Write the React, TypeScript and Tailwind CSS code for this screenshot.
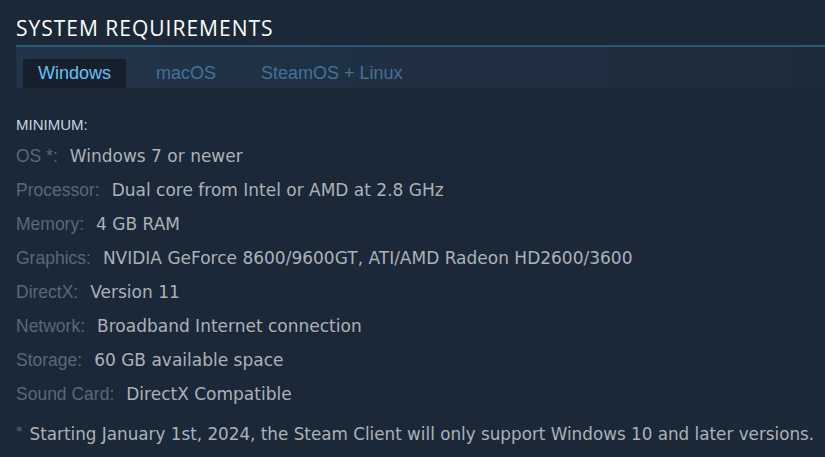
const specs = [
  { label: "OS *:", value: "Windows 7 or newer" },
  { label: "Processor:", value: "Dual core from Intel or AMD at 2.8 GHz" },
  { label: "Memory:", value: "4 GB RAM" },
  { label: "Graphics:", value: "NVIDIA GeForce 8600/9600GT, ATI/AMD Radeon HD2600/3600" },
  { label: "DirectX:", value: "Version 11" },
  { label: "Network:", value: "Broadband Internet connection" },
  { label: "Storage:", value: "60 GB available space" },
  { label: "Sound Card:", value: "DirectX Compatible" },
];

const tabs = ["Windows", "macOS", "SteamOS + Linux"];

export default function App() {
  return (
    <div className="w-[825px] h-[457px] overflow-hidden bg-[#1b2838] pl-4 font-['DejaVu_Sans',sans-serif]">
      {/* Header */}
      <h2 className="pt-[16px] h-[45px] text-[21px] leading-[24px] tracking-[1px] text-white uppercase font-['Open_Sans',sans-serif]">
        System Requirements
      </h2>

      {/* Tab bar */}
      <div className="h-[43px] border-t-2 border-[#2c5876] bg-gradient-to-r from-[#223449] to-[#1e2b3c] flex items-end gap-[15px] pl-[7px] font-['Liberation_Sans',sans-serif]">
        {tabs.map((tab, i) => (
          <div
            key={tab}
            className={
              i === 0
                ? "h-[29px] px-[15px] bg-[#16202d] text-[#66c0f4] text-[18px] leading-[29px]"
                : "h-[29px] px-[15px] text-[#457196] text-[18px] leading-[29px]"
            }
          >
            {tab}
          </div>
        ))}
      </div>

      {/* Minimum specs */}
      <div className="pt-[28px] text-[15px] leading-[18px] text-[#c6d4df] uppercase font-['Liberation_Sans',sans-serif]">
        Minimum:
      </div>
      <ul className="mt-[9px]">
        {specs.map((s) => (
          <li key={s.label} className="h-[34px] leading-[26px] flex items-baseline">
            <span className="text-[17.5px] text-[#56697c] font-['Liberation_Sans',sans-serif]">{s.label}</span>
            <span className="ml-[12px] text-[17px] text-[#acb2b8]">{s.value}</span>
          </li>
        ))}
      </ul>

      <p className="mt-[8px] text-[16.8px] leading-[22px] text-[#acb2b8] flex items-start">
        <span className="text-[#56697c] text-[13px] leading-[16px] mr-[7px]">*</span>
        Starting January 1st, 2024, the Steam Client will only support Windows 10 and later versions.
      </p>
    </div>
  );
}
